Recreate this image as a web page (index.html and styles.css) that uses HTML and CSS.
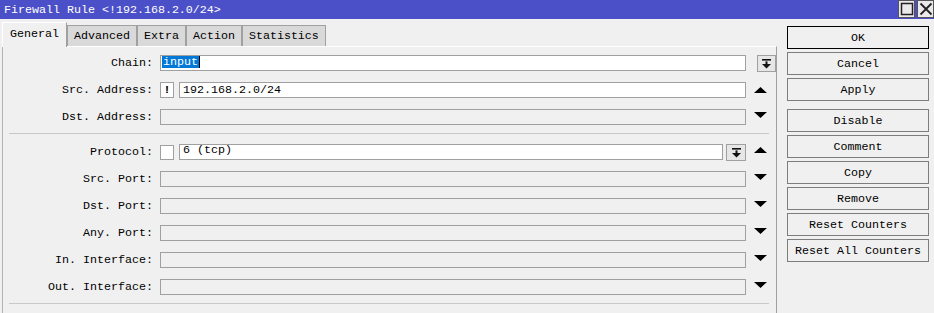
FILE: index.html
```html
<!DOCTYPE html>
<html lang="en">
<head>
    <meta charset="UTF-8">
    <title>Firewall Rule</title>
    <link rel="stylesheet" href="styles.css">
</head>
<body>
    <div class="titlebar">
        <span class="title">Firewall Rule &lt;!192.168.2.0/24&gt;</span>
        <div class="win-btns">
            <span class="win-btn"><svg width="14" height="14" viewBox="0 0 14 14"><rect x="1.5" y="1.5" width="11" height="11" fill="none" stroke="#222" stroke-width="1.5"/></svg></span>
            <span class="win-btn"><svg width="14" height="14" viewBox="0 0 14 14"><path d="M1.5 1.5L12.5 12.5M12.5 1.5L1.5 12.5" stroke="#222" stroke-width="1.8"/></svg></span>
        </div>
    </div>

    <div class="main">
        <div class="left">
            <div class="tabs">
                <div class="tab active">General</div>
                <div class="tab">Advanced</div>
                <div class="tab">Extra</div>
                <div class="tab">Action</div>
                <div class="tab">Statistics</div>
            </div>

            <div class="panel">
                <div class="group">
                    <div class="row">
                        <label>Chain:</label>
                        <div class="ctrl">
                            <div class="field on"><span class="sel">input</span><span class="caret"></span></div>
                        </div>
                        <div class="aside">
                            <span class="drop drop-wide">
                                <svg width="9" height="10" viewBox="0 0 9 10"><rect x="0" y="0" width="9" height="1.6" fill="#111"/><rect x="3.5" y="2.4" width="2" height="3" fill="#111"/><polygon points="0,5 9,5 4.5,9.6" fill="#111"/></svg>
                            </span>
                        </div>
                    </div>
                    <div class="row">
                        <label>Src. Address:</label>
                        <div class="ctrl">
                            <span class="check bang">!</span>
                            <div class="field on pad">192.168.2.0/24</div>
                        </div>
                        <div class="aside up low">
                            <svg width="13" height="6" viewBox="0 0 13 6"><polygon points="0,6 6.5,0 13,6" fill="#000"/></svg>
                        </div>
                    </div>
                    <div class="row">
                        <label>Dst. Address:</label>
                        <div class="ctrl"><div class="field"></div></div>
                        <div class="aside down">
                            <svg width="13" height="6" viewBox="0 0 13 6"><polygon points="0,0 13,0 6.5,6" fill="#000"/></svg>
                        </div>
                    </div>
                </div>

                <div class="sep"></div>

                <div class="group">
                    <div class="row">
                        <label>Protocol:</label>
                        <div class="ctrl">
                            <span class="check"></span>
                            <div class="field on pad top">6 (tcp)</div>
                            <span class="drop">
                                <svg width="9" height="10" viewBox="0 0 9 10"><rect x="0" y="0" width="9" height="1.6" fill="#111"/><rect x="3.5" y="2.4" width="2" height="3" fill="#111"/><polygon points="0,5 9,5 4.5,9.6" fill="#111"/></svg>
                            </span>
                        </div>
                        <div class="aside up">
                            <svg width="13" height="6" viewBox="0 0 13 6"><polygon points="0,6 6.5,0 13,6" fill="#000"/></svg>
                        </div>
                    </div>
                    <div class="row">
                        <label>Src. Port:</label>
                        <div class="ctrl"><div class="field"></div></div>
                        <div class="aside down">
                            <svg width="13" height="6" viewBox="0 0 13 6"><polygon points="0,0 13,0 6.5,6" fill="#000"/></svg>
                        </div>
                    </div>
                    <div class="row">
                        <label>Dst. Port:</label>
                        <div class="ctrl"><div class="field"></div></div>
                        <div class="aside down">
                            <svg width="13" height="6" viewBox="0 0 13 6"><polygon points="0,0 13,0 6.5,6" fill="#000"/></svg>
                        </div>
                    </div>
                    <div class="row">
                        <label>Any. Port:</label>
                        <div class="ctrl"><div class="field"></div></div>
                        <div class="aside down">
                            <svg width="13" height="6" viewBox="0 0 13 6"><polygon points="0,0 13,0 6.5,6" fill="#000"/></svg>
                        </div>
                    </div>
                    <div class="row">
                        <label>In. Interface:</label>
                        <div class="ctrl"><div class="field"></div></div>
                        <div class="aside down">
                            <svg width="13" height="6" viewBox="0 0 13 6"><polygon points="0,0 13,0 6.5,6" fill="#000"/></svg>
                        </div>
                    </div>
                    <div class="row">
                        <label>Out. Interface:</label>
                        <div class="ctrl"><div class="field"></div></div>
                        <div class="aside down">
                            <svg width="13" height="6" viewBox="0 0 13 6"><polygon points="0,0 13,0 6.5,6" fill="#000"/></svg>
                        </div>
                    </div>
                </div>

                <div class="sep"></div>
            </div>
        </div>

        <div class="actions">
            <button class="btn default">OK</button>
            <button class="btn">Cancel</button>
            <button class="btn">Apply</button>
            <button class="btn spaced">Disable</button>
            <button class="btn">Comment</button>
            <button class="btn">Copy</button>
            <button class="btn">Remove</button>
            <button class="btn">Reset Counters</button>
            <button class="btn">Reset All Counters</button>
        </div>
    </div>
</body>
</html>
```

FILE: styles.css
```css
body {
    margin: 0;
    width: 934px;
    height: 313px;
    overflow: hidden;
    background-color: #f0f0f0;
    font-family: "Liberation Mono", "DejaVu Sans Mono", monospace;
    font-size: 11.67px;
    color: #000;
}
.titlebar {
    height: 19px;
    background-color: #4b4fc8;
    display: flex;
    justify-content: space-between;
    align-items: flex-start;
}
.title {
    color: #fff;
    line-height: 20px;
    padding-left: 4px;
}
.win-btns {
    display: flex;
    gap: 2px;
}
.win-btn {
    width: 17px;
    height: 18px;
    box-sizing: border-box;
    border: 1px solid #555;
    background-color: #ece9ea;
    display: flex;
    align-items: center;
    justify-content: center;
}
.main {
    display: flex;
    align-items: flex-start;
}
.left {
    width: 777px;
}
.tabs {
    display: flex;
    align-items: flex-end;
    height: 24px;
    margin-top: 3px;
    padding-left: 2px;
}
.tab {
    height: 21px;
    box-sizing: border-box;
    padding: 0 6px;
    line-height: 21px;
    border: 1px solid #a0a0a0;
    border-bottom: none;
    background-color: #d9d9d9;
}
.tab.active {
    height: 25px;
    margin-bottom: -1px;
    padding: 0 7px;
    line-height: 23px;
    background-color: #f0f0f0;
    border-color: #fff #a0a0a0 #f0f0f0 #fff;
    position: relative;
}
.panel {
    margin-left: 2px;
    width: 775px;
    height: 267px;
    box-sizing: border-box;
    border-left: 1px solid #b4b4b4;
    border-top: 1px solid #fff;
    border-right: 1px solid #a0a0a0;
    padding-top: 8px;
}
.group {
    display: flex;
    flex-direction: column;
    gap: 11px;
}
.row {
    display: flex;
    height: 16px;
    align-items: flex-start;
}
.row label {
    width: 150px;
    margin-right: 7px;
    text-align: right;
    line-height: 17px;
}
.ctrl {
    width: 586px;
    display: flex;
}
.field {
    flex: 1;
    height: 16px;
    box-sizing: border-box;
    border: 1px solid #a0a0a0;
    background-color: #f0f0f0;
    line-height: 14px;
    padding-left: 1px;
    white-space: nowrap;
}
.field.on {
    background-color: #fff;
}
.field.pad {
    padding-left: 3px;
}
.field.top {
    line-height: 11px;
}
.sel {
    background-color: #0078d7;
    color: #fff;
    padding: 0 1px;
    display: inline-block;
    line-height: 12px;
    vertical-align: top;
}
.caret {
    display: inline-block;
    width: 1px;
    height: 12px;
    background-color: #000;
    vertical-align: top;
}
.check {
    width: 14px;
    height: 15px;
    box-sizing: border-box;
    border: 1px solid #a0a0a0;
    background-color: #fff;
    margin-right: 5px;
    margin-top: 1px;
}
.check.bang {
    margin-top: 0;
    height: 16px;
    font-weight: bold;
    text-align: center;
    line-height: 14px;
}
.drop {
    width: 20px;
    height: 17px;
    box-sizing: border-box;
    margin-left: 3px;
    border: 1px solid #a0a0a0;
    background-color: #e6e6e6;
    display: flex;
    align-items: center;
    justify-content: center;
}
.drop-wide {
    width: 19px;
}
.aside {
    width: 30px;
    display: flex;
    padding-left: 8px;
    box-sizing: border-box;
}
.aside.up, .aside.down {
    padding-top: 3px;
}
.aside.low {
    padding-top: 5px;
}
.aside svg {
    display: block;
}
.sep {
    height: 1px;
    background-color: #c8c8c8;
    margin: 8px 7px 10px 6px;
}
.actions {
    width: 142px;
    margin-left: 10px;
    margin-top: 7px;
    display: flex;
    flex-direction: column;
    gap: 3px;
}
.btn {
    height: 23px;
    padding: 0;
    border: 1px solid #7d7d7d;
    background-color: #f0f0f0;
    font-family: inherit;
    font-size: inherit;
    color: #000;
}
.btn.default {
    border-color: #000;
}
.btn.spaced {
    margin-top: 5px;
}
```
